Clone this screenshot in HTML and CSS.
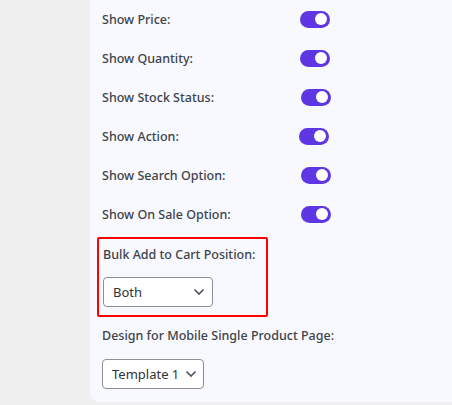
FILE: index.html
```html
<!DOCTYPE html>
<html>
<head>
<meta charset="utf-8">
<link rel="stylesheet" href="styles.css">
</head>
<body>
<div class="page">
  <div class="panel">
    <div class="row"><span class="label">Show Price:</span><span class="toggle"></span></div>
    <div class="row"><span class="label">Show Quantity:</span><span class="toggle"></span></div>
    <div class="row"><span class="label">Show Stock Status:</span><span class="toggle t1"></span></div>
    <div class="row"><span class="label">Show Action:</span><span class="toggle tm1"></span></div>
    <div class="row"><span class="label">Show Search Option:</span><span class="toggle t1"></span></div>
    <div class="row"><span class="label">Show On Sale Option:</span><span class="toggle t1"></span></div>
    <div class="highlight">
      <div class="field-label">Bulk Add to Cart Position:</div>
      <div class="select sel-both">Both<svg class="chev" viewBox="0 0 12 8" width="12" height="8"><path d="M1.5 1.5 L6 6 L10.5 1.5" fill="none" stroke="#50575e" stroke-width="1.7"/></svg></div>
    </div>
    <div class="field-label mobile">Design for Mobile Single Product Page:</div>
    <div class="select sel-tpl">Template 1<svg class="chev" viewBox="0 0 12 8" width="12" height="8"><path d="M1.5 1.5 L6 6 L10.5 1.5" fill="none" stroke="#50575e" stroke-width="1.7"/></svg></div>
  </div>
</div>
</body>
</html>
```
FILE: styles.css
```css
html, body { margin: 0; padding: 0; }
body {
  background: #f0f0f1;
  font-family: "Noto Sans", "Open Sans", sans-serif;
  color: #3c434a;
  width: 452px;
  height: 405px;
  overflow: hidden;
}
.page { padding-left: 90px; }
.panel {
  background: #f8f9fe;
  height: 402px;
  border-bottom-left-radius: 10px;
  padding-left: 12px;
  box-sizing: border-box;
}
.row {
  height: 39px;
  display: flex;
  align-items: center;
}
.label {
  width: 198px;
  font-size: 12.5px;
  font-weight: 500;
}
.toggle {
  width: 30px;
  height: 17px;
  border-radius: 9px;
  background: #5f36e4;
  position: relative;
  margin-top: -1px;
}
.toggle::after {
  content: "";
  position: absolute;
  right: 3px;
  top: 2.5px;
  width: 12px;
  height: 12px;
  border-radius: 50%;
  background: #fff;
}
.t1 { margin-left: 1px; }
.tm1 { margin-left: -1px; }
.highlight {
  margin-top: 3px;
  margin-left: -5px;
  width: 171px;
  height: 80px;
  box-sizing: border-box;
  border: 2px solid #ff0000;
  border-radius: 2px;
  padding: 4px 0 0 4px;
}
.field-label {
  font-size: 12.5px;
  font-weight: 500;
  line-height: 24px;
}
.select {
  box-sizing: border-box;
  height: 30px;
  border: 1px solid #8c8f94;
  border-radius: 4px;
  background: #fff;
  display: flex;
  align-items: center;
  justify-content: space-between;
  padding: 0 7px 0 9px;
  font-size: 13px;
  color: #2c3338;
  margin-top: 10px;
}
.sel-both { width: 110px; }
.sel-tpl { width: 102px; margin-top: 11px; padding-right: 6px; }
.mobile { margin-top: 7px; }
.chev { display: block; }
```
